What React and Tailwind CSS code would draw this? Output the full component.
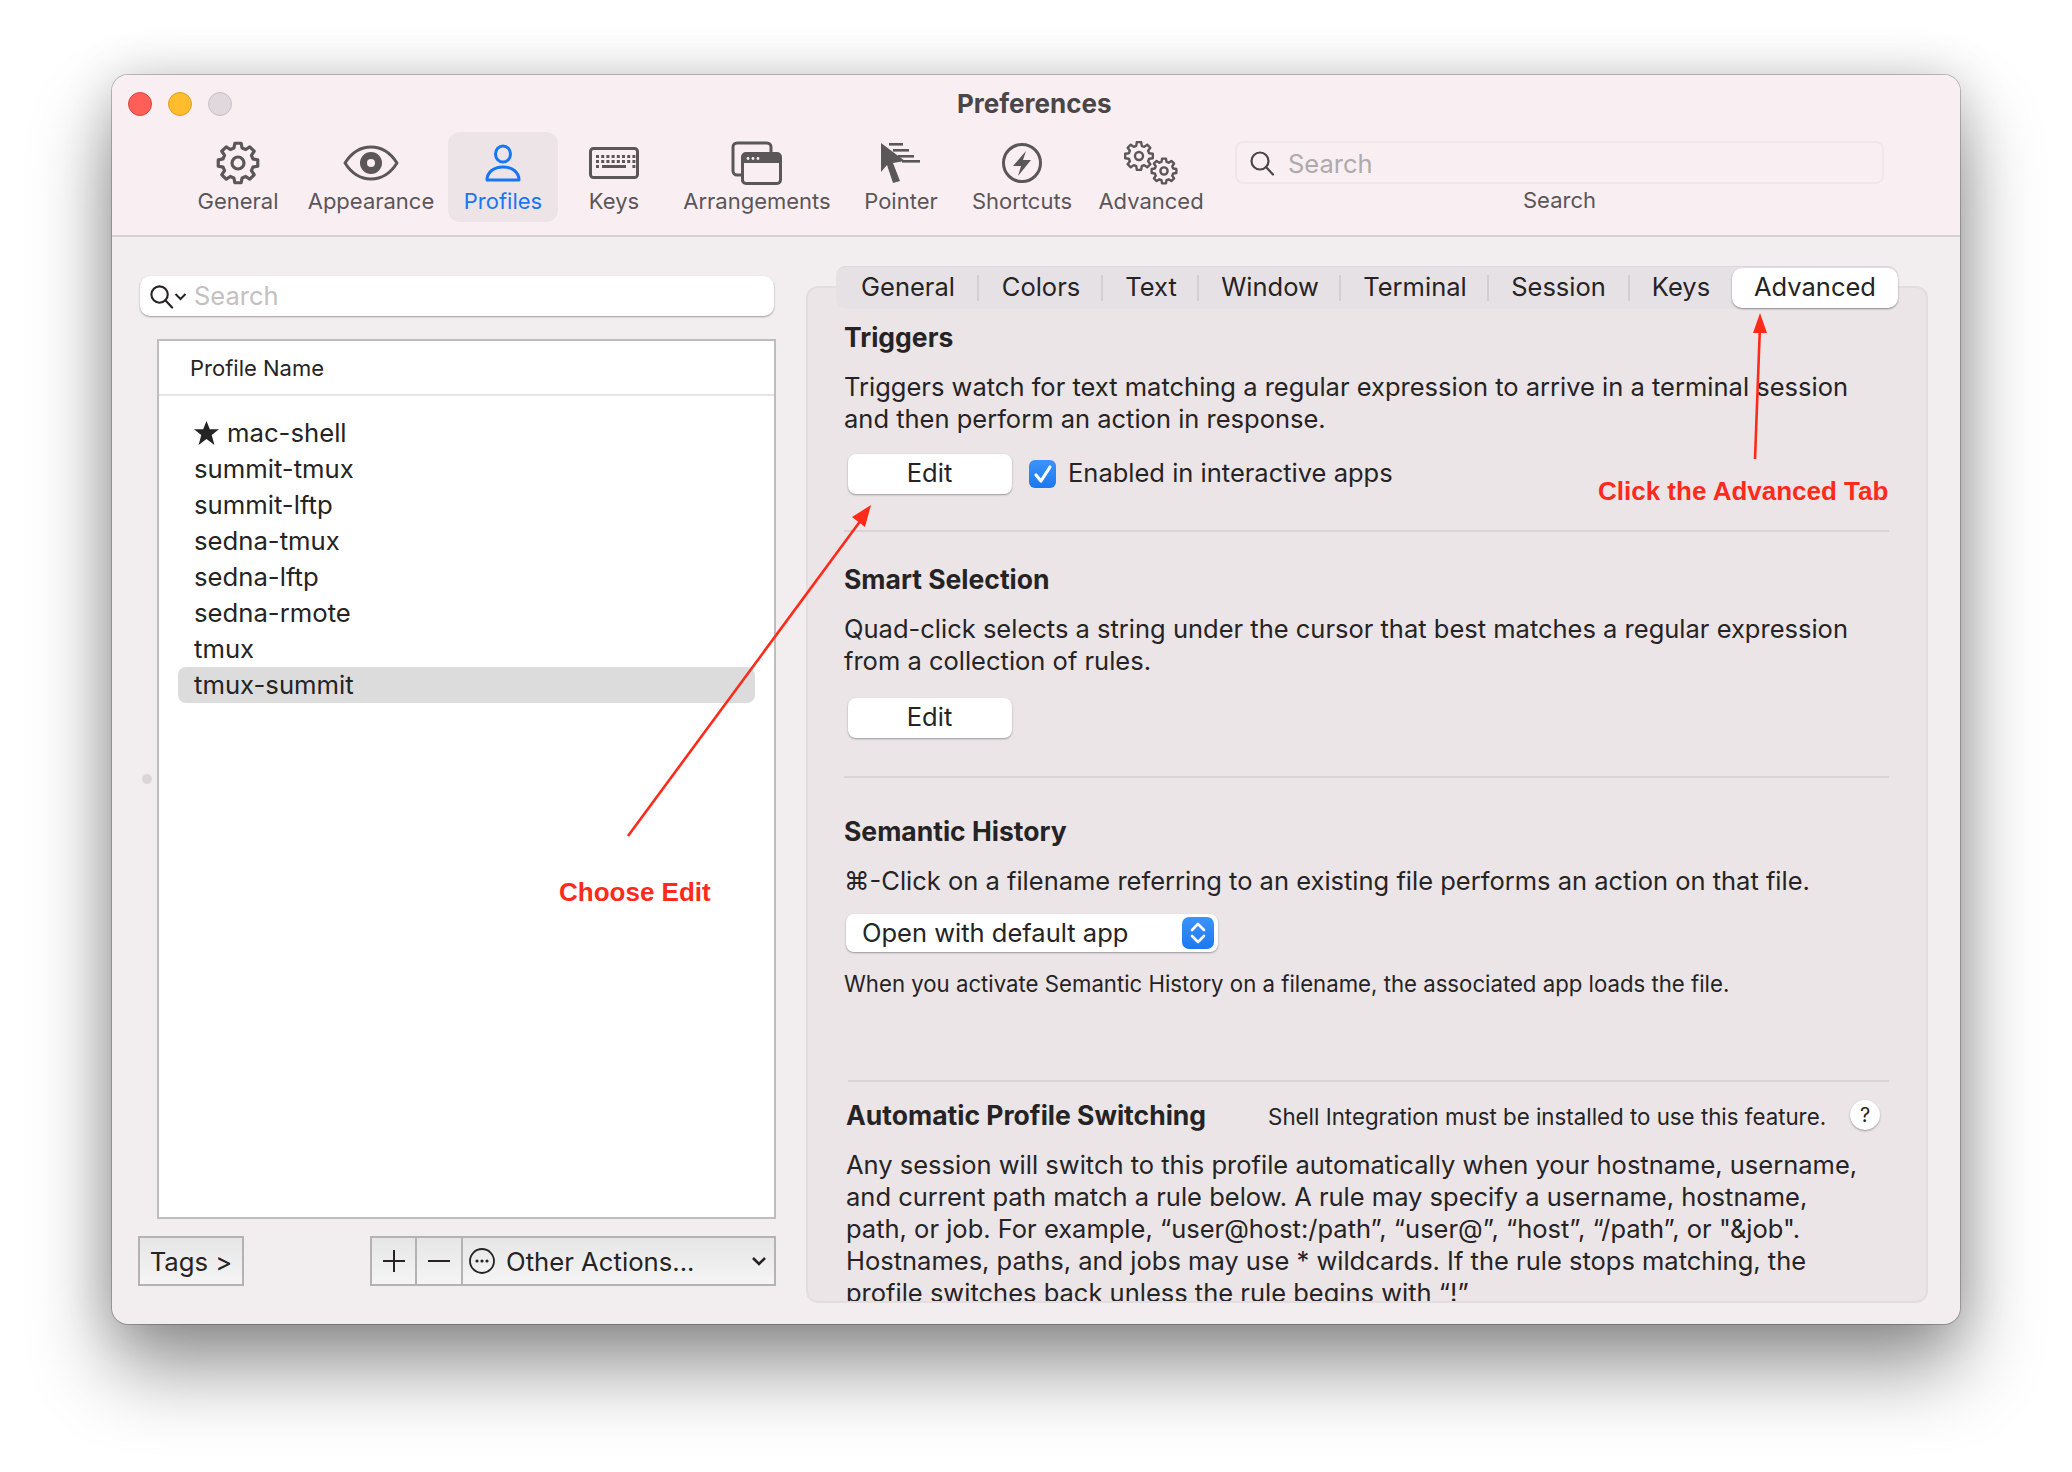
import * as React from 'react';

const toolbarItems = [
  { label: 'General', width: 'w-[112px]', icon: <GearIcon /> },
  { label: 'Appearance', width: 'w-[154px]', icon: <EyeIcon /> },
  { label: 'Profiles', width: 'w-[110px]', icon: <PersonIcon />, active: true },
  { label: 'Keys', width: 'w-[112px]', icon: <KeyboardIcon /> },
  { label: 'Arrangements', width: 'w-[174px]', icon: <WindowsIcon /> },
  { label: 'Pointer', width: 'w-[114px]', icon: <PointerIcon /> },
  { label: 'Shortcuts', width: 'w-[128px]', icon: <BoltIcon /> },
  { label: 'Advanced', width: 'w-[130px]', icon: <GearsIcon /> },
];

const tabs = [
  { label: 'General', width: 'w-[143px] pl-[3px]' },
  { label: 'Colors', width: 'w-[124px] pl-[2px]' },
  { label: 'Text', width: 'w-[96px] pl-[2px]' },
  { label: 'Window', width: 'w-[142px] pl-[2px]' },
  { label: 'Terminal', width: 'w-[148px] pl-[2px]' },
  { label: 'Session', width: 'w-[141px]' },
  { label: 'Keys', width: 'w-[102px]' },
];

const profiles = ['summit-tmux', 'summit-lftp', 'sedna-tmux', 'sedna-lftp', 'sedna-rmote', 'tmux'];

function gearPath(cx, cy, outer, inner, teeth) {
  const step = (Math.PI * 2) / teeth;
  let d = '';
  for (let i = 0; i < teeth; i++) {
    const a = i * step - Math.PI / 2;
    const pts = [
      [inner, a - step * 0.34],
      [outer, a - step * 0.2],
      [outer, a + step * 0.2],
      [inner, a + step * 0.34],
    ];
    pts.forEach(([r, t], j) => {
      const x = (cx + r * Math.cos(t)).toFixed(2);
      const y = (cy + r * Math.sin(t)).toFixed(2);
      d += `${i === 0 && j === 0 ? 'M' : 'L'}${x} ${y} `;
    });
  }
  return d + 'Z';
}

function GearIcon() {
  return (
    <svg width="44" height="44" viewBox="0 0 44 44" fill="none" stroke="#5b5657" strokeWidth="3.2" strokeLinejoin="round">
      <path d={gearPath(22, 22, 20, 15.5, 8)} />
      <circle cx="22" cy="22" r="6" />
    </svg>
  );
}

function EyeIcon() {
  return (
    <svg width="56" height="36" viewBox="0 0 56 36" fill="none">
      <path d="M2 18C9 7 18 2 28 2s19 5 26 16c-7 11-16 16-26 16S9 29 2 18Z" stroke="#5b5657" strokeWidth="3" strokeLinejoin="round" />
      <circle cx="28" cy="18" r="11" fill="#5b5657" />
      <circle cx="28" cy="18" r="4" fill="#f9eff3" />
    </svg>
  );
}

function PersonIcon() {
  return (
    <svg width="38" height="38" viewBox="0 0 38 38" fill="none" stroke="#1976f2" strokeWidth="3">
      <ellipse cx="19" cy="10" rx="7.5" ry="8" />
      <path d="M3 36c0-8 7-13 16-13s16 5 16 13H3Z" strokeLinejoin="round" />
    </svg>
  );
}

function KeyboardIcon() {
  const dots = [];
  for (let row = 0; row < 3; row++) {
    for (let col = 0; col < 8; col++) {
      if (row === 2 && col > 0 && col < 7) continue;
      dots.push(<rect key={row + '-' + col} x={7 + col * 5.2} y={8 + row * 5} width="3" height="3" fill="#5b5657" />);
    }
  }
  return (
    <svg width="50" height="32" viewBox="0 0 50 32" fill="none">
      <rect x="1.5" y="1.5" width="47" height="29" rx="3" stroke="#5b5657" strokeWidth="3" />
      {dots}
      <rect x="13" y="18" width="24" height="3" fill="#5b5657" />
    </svg>
  );
}

function WindowsIcon() {
  return (
    <svg width="52" height="44" viewBox="0 0 52 44" fill="none">
      <path d="M10 34H6a4 4 0 0 1-4-4V6a4 4 0 0 1 4-4h30a4 4 0 0 1 4 4v5" stroke="#5b5657" strokeWidth="3" />
      <rect x="11.5" y="12.5" width="38" height="30" rx="3.5" fill="#f9eff3" stroke="#5b5657" strokeWidth="3" />
      <path d="M11.5 16a3.5 3.5 0 0 1 3.5-3.5h31a3.5 3.5 0 0 1 3.5 3.5v6h-38Z" fill="#5b5657" />
      <circle cx="17" cy="17.5" r="1.4" fill="#f9eff3" />
      <circle cx="22" cy="17.5" r="1.4" fill="#f9eff3" />
      <circle cx="27" cy="17.5" r="1.4" fill="#f9eff3" />
    </svg>
  );
}

function PointerIcon() {
  return (
    <svg width="40" height="40" viewBox="0 0 40 40" fill="#5b5657">
      <path d="M0 0 24 18 12 20 19 38 12 40 6 22 0 29Z" />
      <rect x="8" y="0" width="14" height="2.6" />
      <rect x="12" y="6" width="16" height="2.6" />
      <rect x="17" y="12" width="16" height="2.6" />
      <rect x="21" y="17" width="18" height="2.6" />
    </svg>
  );
}

function BoltIcon() {
  return (
    <svg width="42" height="42" viewBox="0 0 42 42" fill="none">
      <circle cx="21" cy="21" r="18.5" stroke="#5b5657" strokeWidth="3" />
      <path d="M25 9 12 24h8l-3 10 13-16h-8l3-9Z" fill="#5b5657" />
    </svg>
  );
}

function GearsIcon() {
  return (
    <svg width="54" height="44" viewBox="0 0 54 44" fill="none" stroke="#5b5657" strokeWidth="2.4" strokeLinejoin="round">
      <path d={gearPath(15, 15, 14, 10.5, 8)} />
      <circle cx="15" cy="15" r="4" />
      <path d={gearPath(40, 30, 12.5, 9.5, 8)} />
      <circle cx="40" cy="30" r="3.6" />
    </svg>
  );
}

function SearchGlass({ color, size = 26 }) {
  return (
    <svg width={size} height={size} viewBox="0 0 26 26" fill="none" stroke={color} strokeWidth="2.2" strokeLinecap="round">
      <circle cx="11" cy="11" r="8.5" />
      <path d="m17 17 7 7.5" />
    </svg>
  );
}

function EditButton() {
  return (
    <div className="flex h-[40px] w-[164px] items-center justify-center rounded-[8px] bg-white pb-[2px] pr-[1px] shadow-[0_1px_2px_rgba(0,0,0,0.35)]">
      Edit
    </div>
  );
}

function Heading({ children }) {
  return <div className="text-[26.5px] font-bold">{children}</div>;
}

function Divider({ className }) {
  return <div className={'h-[2px] bg-[#d9d3d6] ' + className} />;
}

function ToolbarItem({ item }) {
  return (
    <div className={'flex h-[90px] flex-col items-center rounded-[12px] ' + item.width + (item.active ? ' bg-[#ede4e8] text-[#1976f2]' : ' text-[#5b5657]')}>
      <div className="flex h-[62px] items-center">{item.icon}</div>
      <div className="mt-[-7px] text-[22px] leading-[28px]">{item.label}</div>
    </div>
  );
}

export default function App() {
  return (
    <div className="relative h-[1472px] w-[2072px] overflow-hidden bg-white pl-[112px] pt-[75px] text-[#262324] [font-family:Inter,sans-serif]">
      <div className="flex h-[1249px] w-[1848px] flex-col overflow-hidden rounded-[16px] bg-[#f2edef] shadow-[0_0_0_1px_rgba(0,0,0,0.22),0_44px_80px_rgba(0,0,0,0.42),0_0_50px_rgba(0,0,0,0.16)]">
        {/* toolbar */}
        <div className="relative h-[162px] shrink-0 border-b-2 border-[#d5d0d2] bg-[#f9eff3]">
          <div className="flex h-[57px] items-center pl-[16px]">
            <div className="flex gap-[16px]">
              <div className="h-[24px] w-[24px] rounded-full border border-[#e0443e] bg-[#ff5f57]" />
              <div className="h-[24px] w-[24px] rounded-full border border-[#dea123] bg-[#ffbd2e]" />
              <div className="h-[24px] w-[24px] rounded-full border border-[#c9bfc3] bg-[#e0d8dc]" />
            </div>
            <div className="ml-[725px] text-[26px] font-bold leading-[32px] text-[#4a4546]">Preferences</div>
          </div>
          <div className="flex pl-[70px]">
            {toolbarItems.map((item) => (
              <ToolbarItem key={item.label} item={item} />
            ))}
            <div className="ml-[19px] flex w-[649px] flex-col items-center">
              <div className="mt-[9px] flex h-[43px] w-full items-center rounded-[8px] border-2 border-[#f0e7eb] pl-[12px] text-[25.5px] text-[#aeaaac]">
                <SearchGlass color="#4a4546" />
                <span className="ml-[13px] mt-[3px]">Search</span>
              </div>
              <div className="mt-[2px] text-[22px] leading-[28px] text-[#5b5657]">Search</div>
            </div>
          </div>
        </div>

        {/* body */}
        <div className="flex min-h-0 flex-1">
          {/* left pane */}
          <div className="flex w-[694px] shrink-0 flex-col pl-[26px]">
            <div className="ml-[2px] mt-[39px] flex h-[40px] w-[634px] items-center rounded-[10px] bg-white pl-[9px] text-[25.5px] text-[#c4c0c2] shadow-[0_1px_2px_rgba(0,0,0,0.35)]">
              <SearchGlass color="#262324" size="25" />
              <svg width="13" height="8" viewBox="0 0 12 8" fill="none" stroke="#262324" strokeWidth="2" className="mt-[2px]">
                <path d="m1 1 5 5 5-5" />
              </svg>
              <span className="ml-[7px]">Search</span>
            </div>
            <div className="relative ml-[19px] mt-[23px] flex h-[880px] w-[619px] flex-col border-2 border-[#bdbdbd] bg-white">
              <div className="flex h-[55px] shrink-0 items-center border-b-2 border-[#e5e5e5] pl-[31px] pt-[2px] text-[22px]">Profile Name</div>
              <div className="pl-[19px] pr-[19px] pt-[19px] text-[25.7px] leading-[36px]">
                <div className="flex h-[36px] items-center pl-[16px]">
                  <svg width="25" height="24" viewBox="0 0 24 23" fill="#262324" className="mr-[8px]">
                    <path d="m12 0 3.2 8H24l-7 5.4L19.6 23 12 17.2 4.4 23 7 13.4 0 8h8.8Z" />
                  </svg>
                  mac-shell
                </div>
                {profiles.map((name) => (
                  <div key={name} className="h-[36px] pl-[16px]">{name}</div>
                ))}
                <div className="h-[36px] rounded-[8px] bg-[#dcdcdc] pl-[16px]">tmux-summit</div>
              </div>
            </div>
            <div className="mt-[17px] flex text-[25.7px]">
              <div className="flex h-[50px] w-[106px] items-center justify-center border-2 border-[#b3b3b3] bg-gradient-to-b from-[#e6e6e6] to-[#f5f5f5] pt-[2px]">Tags &gt;</div>
              <div className="ml-[126px] flex h-[50px] w-[406px] items-center border-2 border-[#b3b3b3] bg-gradient-to-b from-[#e6e6e6] to-[#f5f5f5]">
                <div className="flex h-full w-[45px] items-center justify-center border-r-2 border-[#b3b3b3]">
                  <svg width="22" height="22" viewBox="0 0 22 22" stroke="#262324" strokeWidth="2"><path d="M11 0v22M0 11h22" /></svg>
                </div>
                <div className="flex h-full w-[46px] items-center justify-center border-r-2 border-[#b3b3b3]">
                  <svg width="22" height="22" viewBox="0 0 22 22" stroke="#262324" strokeWidth="2"><path d="M0 11h22" /></svg>
                </div>
                <svg width="26" height="26" viewBox="0 0 26 26" fill="#262324" className="ml-[6px]">
                  <circle cx="13" cy="13" r="12" fill="none" stroke="#262324" strokeWidth="1.8" />
                  <circle cx="8" cy="13" r="1.6" />
                  <circle cx="13" cy="13" r="1.6" />
                  <circle cx="18" cy="13" r="1.6" />
                </svg>
                <span className="ml-[11px] pt-[2px]">Other Actions...</span>
                <svg width="14" height="10" viewBox="0 0 14 10" fill="none" stroke="#262324" strokeWidth="2.6" className="ml-auto mr-[8px]">
                  <path d="m1 2 6 6 6-6" />
                </svg>
              </div>
            </div>
            <div className="absolute left-[142px] top-[774px] h-[10px] w-[10px] rounded-full bg-[#dbd5d8]" />
          </div>

          {/* right pane */}
          <div className="flex min-w-0 flex-1 flex-col pt-[29px]">
            <div className="relative z-10 ml-[30px] flex h-[43px] w-[1062px] items-center rounded-[10px] border-t border-[#dcd7da] bg-[#e6e1e4] text-[25.5px]">
              {tabs.map((tab, i) => (
                <div key={tab.label} className={'flex h-[26px] items-center justify-center pb-[2px] ' + tab.width + (i < 6 ? ' border-r-2 border-[#d3ced1]' : '')}>
                  {tab.label}
                </div>
              ))}
              <div className="flex h-[40px] w-[166px] items-center justify-center rounded-[10px] bg-white pb-[2px] shadow-[0_1px_2px_rgba(0,0,0,0.4)]">Advanced</div>
            </div>
            <div className="mt-[-23px] h-[1017px] w-[1122px] overflow-hidden rounded-[12px] border-2 border-[#e3dde0] bg-[#ebe5e8] pl-[36px] pr-[37px] pt-[33px] text-[25.5px] leading-[32px]">
              <Heading>Triggers</Heading>
              <p className="mt-[18px] whitespace-nowrap">
                Triggers watch for text matching a regular expression to arrive in a terminal session
                <br />
                and then perform an action in response.
              </p>
              <div className="ml-[4px] mt-[19px] flex items-center">
                <EditButton />
                <div className="ml-[17px] flex h-[28px] w-[27px] items-center justify-center rounded-[6px] bg-gradient-to-b from-[#3c93fb] to-[#1a78f0]">
                  <svg width="20" height="20" viewBox="0 0 20 20" fill="none" stroke="#fff" strokeWidth="3.2" strokeLinecap="round" strokeLinejoin="round"><path d="m3 11 5 6 9-14" /></svg>
                </div>
                <span className="ml-[12px] pb-[2px]">Enabled in interactive apps</span>
              </div>
              <Divider className="mt-[36px]" />
              <div className="mt-[31px]"><Heading>Smart Selection</Heading></div>
              <p className="mt-[18px] whitespace-nowrap">
                Quad-click selects a string under the cursor that best matches a regular expression
                <br />
                from a collection of rules.
              </p>
              <div className="ml-[4px] mt-[21px]"><EditButton /></div>
              <Divider className="mt-[38px]" />
              <div className="mt-[37px]"><Heading>Semantic History</Heading></div>
              <p className="mt-[18px] whitespace-nowrap">⌘-Click on a filename referring to an existing file performs an action on that file.</p>
              <div className="ml-[2px] mt-[17px] flex h-[38px] w-[372px] items-center rounded-[8px] bg-white pb-[1px] pl-[16px] shadow-[0_1px_2px_rgba(0,0,0,0.35)]">
                Open with default app
                <div className="ml-auto mr-[4px] flex h-[32px] w-[32px] items-center justify-center rounded-[7px] bg-gradient-to-b from-[#3c93fb] to-[#1a78f0]">
                  <svg width="18" height="24" viewBox="0 0 18 24" fill="none" stroke="#fff" strokeWidth="2.6" strokeLinecap="round" strokeLinejoin="round"><path d="m3 9 6-6 6 6M3 15l6 6 6-6" /></svg>
                </div>
              </div>
              <p className="mt-[16px] whitespace-nowrap text-[22.2px]">When you activate Semantic History on a filename, the associated app loads the file.</p>
              <Divider className="ml-[4px] mt-[80px]" />
              <div className="ml-[2px] mt-[17px] flex h-[32px] items-center">
                <Heading>Automatic Profile Switching</Heading>
                <span className="ml-[62px] mt-[4px] text-[22.3px]">Shell Integration must be installed to use this feature.</span>
                <div className="ml-[24px] flex h-[30px] w-[30px] items-center justify-center rounded-full bg-white text-[20px] shadow-[0_1px_2px_rgba(0,0,0,0.35)]">?</div>
              </div>
              <p className="ml-[2px] mt-[18px] whitespace-nowrap">
                Any session will switch to this profile automatically when your hostname, username,
                <br />
                and current path match a rule below. A rule may specify a username, hostname,
                <br />
                path, or job. For example, “user@host:/path”, “user@”, “host”, “/path”, or "&job".
                <br />
                Hostnames, paths, and jobs may use * wildcards. If the rule stops matching, the
                <br />
                profile switches back unless the rule begins with “!”
              </p>
            </div>
          </div>
        </div>
      </div>

      {/* annotations */}
      <svg width="2072" height="1472" viewBox="0 0 2072 1472" className="pointer-events-none absolute left-0 top-0" fill="#ff2a1a" stroke="#ff2a1a">
        <path d="M1755 459 1760 325" strokeWidth="2.6" fill="none" />
        <path d="M1760 313 1767 333H1753Z" stroke="none" />
        <path d="M628 836 864 516" strokeWidth="2.6" fill="none" />
        <path d="M871 505 865 527 852 517Z" stroke="none" />
      </svg>
      <div className="absolute left-[1598px] top-[475px] text-[26px] font-bold leading-[32px] text-[#ff2a1a] [font-family:'Liberation_Sans',sans-serif]">Click the Advanced Tab</div>
      <div className="absolute left-[559px] top-[876px] text-[26px] font-bold leading-[32px] text-[#ff2a1a] [font-family:'Liberation_Sans',sans-serif]">Choose Edit</div>
    </div>
  );
}
